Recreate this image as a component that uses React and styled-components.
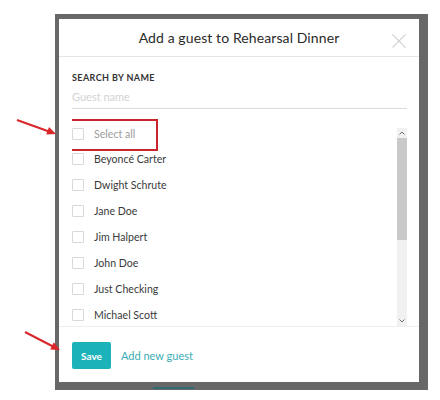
import React from "react"
import styled, { createGlobalStyle } from "styled-components"

const GlobalStyle = createGlobalStyle`
  body {
    margin: 0;
    background: #fff;
    font-family: Lato, "Liberation Sans", sans-serif;
  }
`
const Page = styled.div`
  position: relative;
  width: 440px;
  height: 400px;
  box-sizing: border-box;
  padding: 14px 12px 10px 55px;
`
const Backdrop = styled.div`
  position: relative;
  width: 373px;
  height: 376px;
  box-sizing: border-box;
  padding: 5px 9px 8px 4px;
  background: #686868;
  display: flex;
  &::after {
    content: "";
    position: absolute;
    left: 98px;
    bottom: 1px;
    width: 41px;
    height: 2px;
    background: #2e6d72;
  }
`
const Modal = styled.div`
  flex: 1;
  background: #fff;
  display: flex;
  flex-direction: column;
`
const Header = styled.div`
  position: relative;
  height: 37px;
  border-bottom: 1px solid #e6e6e6;
  display: flex;
  align-items: center;
  justify-content: center;
`
const Title = styled.h2`
  margin: 0;
  font-size: 14px;
  font-weight: 400;
  letter-spacing: 0.1px;
  color: #2a2a2a;
`
const Close = styled.button`
  position: absolute;
  right: 12px;
  top: 14px;
  width: 16px;
  height: 16px;
  padding: 0;
  border: none;
  background: none;
  svg {
    display: block;
  }
`
const Body = styled.div`
  padding: 15px 12px 0 13px;
`
const Label = styled.div`
  font-size: 9px;
  line-height: 12px;
  font-weight: 700;
  letter-spacing: 0.4px;
  color: #333;
  text-transform: uppercase;
`
const Input = styled.input`
  display: block;
  width: 100%;
  height: 20px;
  margin-top: 5px;
  box-sizing: border-box;
  padding: 0 0 4px 0;
  border: none;
  border-bottom: 1px solid #dcdcdc;
  font-family: inherit;
  font-size: 11px;
  outline: none;
  &::placeholder {
    color: #d2d2d2;
  }
`
const ListArea = styled.div`
  margin-top: 10px;
  height: 208px;
  box-sizing: border-box;
  padding: 0 12px 0 13px;
  border-bottom: 1px solid #efefef;
  display: flex;
`
const Rows = styled.div`
  flex: 1;
  padding-top: 3px;
  overflow: hidden;
`
const Row = styled.label`
  position: relative;
  display: flex;
  align-items: center;
  gap: 10px;
  height: ${({ $short }) => ($short ? "24px" : "26px")};
  ${({ $marked }) =>
    $marked &&
    `
    &::after {
      content: "";
      position: absolute;
      left: -12px;
      top: -3px;
      width: 98px;
      height: 32px;
      box-sizing: border-box;
      border: 2px solid #c9252c;
    }
  `}
`
const Box = styled.span`
  width: 12px;
  height: 12px;
  box-sizing: border-box;
  border: 1px solid #d8d8d8;
  border-radius: 1px;
  flex-shrink: 0;
`
const Name = styled.span`
  font-size: 10.6px;
  color: ${({ $muted }) => ($muted ? "#9c9c9c" : "#3a3a3a")};
`
const Scrollbar = styled.div`
  width: 10px;
  margin-top: 9px;
  background: #f1f1f1;
  display: flex;
  flex-direction: column;
`
const Arrow = styled.div`
  height: 10px;
  display: flex;
  align-items: center;
  justify-content: center;
`
const Thumb = styled.div`
  height: 102px;
  background: #c9c9c9;
`
const Spacer = styled.div`
  flex: 1;
`
const Footer = styled.div`
  padding: 15px 13px 13px;
  display: flex;
  align-items: center;
  gap: 10px;
`
const SaveButton = styled.button`
  width: 39px;
  height: 27px;
  padding: 0;
  border: none;
  border-radius: 2px;
  background: #1cb2b9;
  color: #fff;
  font-family: inherit;
  font-size: 10px;
  font-weight: 700;
`
const LinkText = styled.a`
  font-size: 11px;
  color: #3aaeb4;
  text-decoration: none;
`
const Annotations = styled.svg`
  position: absolute;
  left: 0;
  top: 0;
  pointer-events: none;
`

const guests = [
  "Beyoncé Carter",
  "Dwight Schrute",
  "Jane Doe",
  "Jim Halpert",
  "John Doe",
  "Just Checking",
  "Michael Scott",
]

const Chevron = ({ up }) => (
  <svg width="6" height="4" viewBox="0 0 6 4">
    <path
      d={up ? "M0.5 3.5 L3 1 L5.5 3.5" : "M0.5 0.5 L3 3 L5.5 0.5"}
      fill="none"
      stroke="#6f6f6f"
      strokeWidth="1"
    />
  </svg>
)

const App = () => {
  return (
    <Page>
      <GlobalStyle />
      <Backdrop>
        <Modal>
          <Header>
            <Title>Add a guest to Rehearsal Dinner</Title>
            <Close aria-label="Close">
              <svg width="16" height="16" viewBox="0 0 16 16">
                <path d="M1.5 1.5 L14.5 14.5 M14.5 1.5 L1.5 14.5" stroke="#d4d4d4" strokeWidth="1.3" />
              </svg>
            </Close>
          </Header>
          <Body>
            <Label>Search by name</Label>
            <Input placeholder="Guest name" />
          </Body>
          <ListArea>
            <Rows>
              <Row $short $marked>
                <Box />
                <Name $muted>Select all</Name>
              </Row>
              {guests.map(g => (
                <Row key={g}>
                  <Box />
                  <Name>{g}</Name>
                </Row>
              ))}
            </Rows>
            <Scrollbar>
              <Arrow>
                <Chevron up />
              </Arrow>
              <Thumb />
              <Spacer />
              <Arrow>
                <Chevron />
              </Arrow>
            </Scrollbar>
          </ListArea>
          <Footer>
            <SaveButton>Save</SaveButton>
            <LinkText href="#">Add new guest</LinkText>
          </Footer>
        </Modal>
      </Backdrop>
      <Annotations width="440" height="400">
        <line x1="17" y1="120" x2="49" y2="131.5" stroke="#d8262b" strokeWidth="2" />
        <polygon points="56,134 46.2,134.6 49,127.1" fill="#d8262b" />
        <line x1="25" y1="332" x2="54" y2="347" stroke="#d8262b" strokeWidth="2" />
        <polygon points="60,350 50.2,349.5 53.8,342.3" fill="#d8262b" />
      </Annotations>
    </Page>
  )
}

export default App
